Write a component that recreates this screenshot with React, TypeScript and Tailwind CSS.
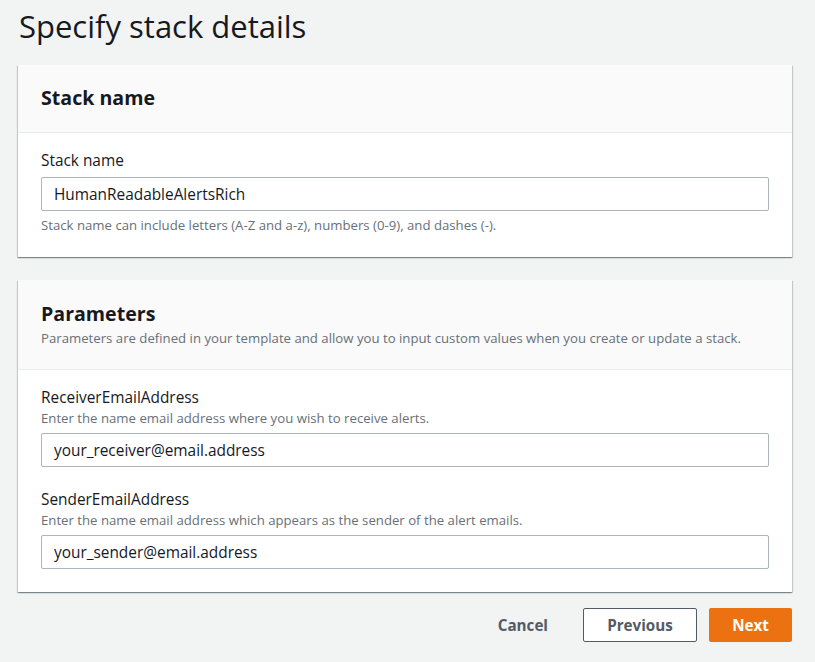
import React from "react";

const font = { fontFamily: '"Open Sans", "Noto Sans", Arial, sans-serif' };

interface FieldProps {
  label: string;
  hint?: string;
  value: string;
  help?: string;
}

const Field: React.FC<FieldProps> = ({ label, hint, value, help }) => (
  <div className="flex flex-col">
    <label className="text-[15.4px] leading-[22px] text-[#16191f]">{label}</label>
    {hint && <p className="text-[13.2px] leading-[18px] text-[#687078]">{hint}</p>}
    <input
      readOnly
      value={value}
      className={`${hint ? "mt-[6px]" : "mt-[5px]"} h-[34px] w-full rounded-[2px] border border-[#aab7b8] bg-white px-[12px] text-[15.4px] text-[#16191f] outline-none`}
    />
    {help && <p className="mt-[5px] text-[13.2px] leading-[18px] text-[#687078]">{help}</p>}
  </div>
);

const Card: React.FC<{ title: string; description?: string; children: React.ReactNode }> = ({
  title,
  description,
  children,
}) => (
  <section className="bg-white shadow-[0_1px_1px_0_rgba(0,28,36,0.3),1px_1px_1px_0_rgba(0,28,36,0.15),-1px_1px_1px_0_rgba(0,28,36,0.15)]">
    <div
      className={`border-b border-[#eaeded] bg-[#fafafa] px-[23px] ${
        description ? "pt-[20px] pb-[21px]" : "pt-[19px] pb-[20px]"
      }`}
    >
      <h2 className="text-[19.6px] leading-[28px] font-bold text-[#16191f]">{title}</h2>
      {description && <p className="text-[13.2px] leading-[20px] text-[#687078]">{description}</p>}
    </div>
    <div className="flex flex-col gap-[22px] px-[23px] pt-[17px] pb-[23px]">{children}</div>
  </section>
);

export default function App() {
  return (
    <div style={font} className="min-h-[662px] w-full bg-[#f2f3f3] px-[18px] pt-[6px] pb-[20px] text-[#16191f]">
      <h1 className="pl-[1px] text-[31px] leading-[40px] text-[#16191f]">Specify stack details</h1>

      <div className="mt-[19px] flex w-[774px] flex-col gap-[23px]">
        <Card title="Stack name">
          <Field
            label="Stack name"
            value="HumanReadableAlertsRich"
            help="Stack name can include letters (A-Z and a-z), numbers (0-9), and dashes (-)."
          />
        </Card>

        <Card
          title="Parameters"
          description="Parameters are defined in your template and allow you to input custom values when you create or update a stack."
        >
          <Field
            label="ReceiverEmailAddress"
            hint="Enter the name email address where you wish to receive alerts."
            value="your_receiver@email.address"
          />
          <Field
            label="SenderEmailAddress"
            hint="Enter the name email address which appears as the sender of the alert emails."
            value="your_sender@email.address"
          />
        </Card>
      </div>

      <div className="mt-[16px] flex w-[774px] items-center justify-end">
        <button className="mr-[35px] text-[15.2px] font-bold text-[#545b64]">Cancel</button>
        <button className="mr-[12px] h-[34px] w-[114px] rounded-[2px] border border-[#545b64] bg-white text-[15.2px] font-bold text-[#545b64]">
          Previous
        </button>
        <button className="h-[34px] w-[83px] rounded-[2px] bg-[#ec7211] text-[15.2px] font-bold text-white">
          Next
        </button>
      </div>
    </div>
  );
}
